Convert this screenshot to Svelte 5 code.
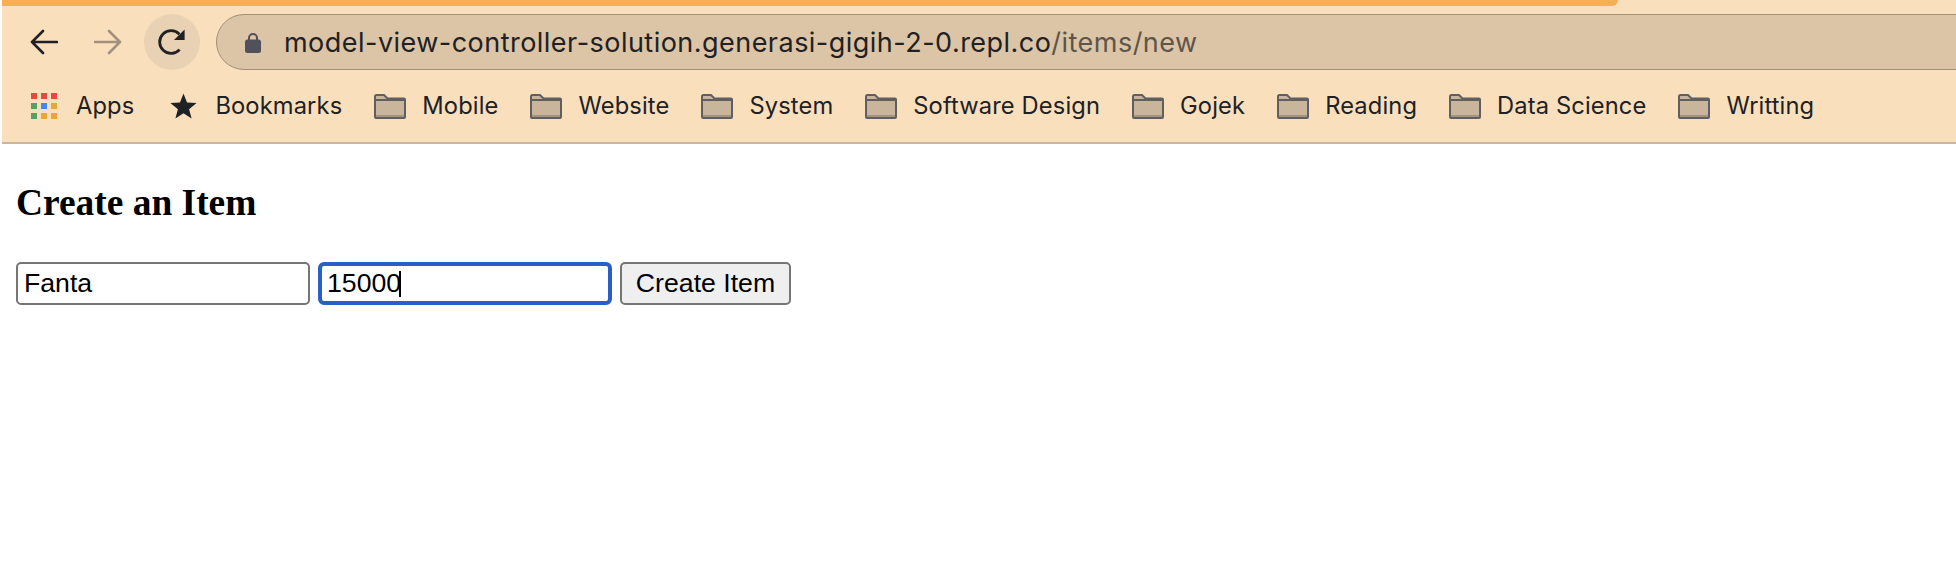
<script>
  const folders = ['Mobile', 'Website', 'System', 'Software Design', 'Gojek', 'Reading', 'Data Science', 'Writting'];
  const appColors = ['#e64a3f', '#e64a3f', '#e64a3f', '#55a164', '#4285f4', '#e8a63a', '#55a164', '#e8a63a', '#e8a63a'];

  let name = 'Fanta';
  let price = '15000';
</script>

<div class="chrome">
  <div class="tabstrip"></div>

  <div class="nav">
    <button class="navbtn" aria-label="Back">
      <svg width="28" height="26" viewBox="0 0 28 26">
        <path d="M27 13H2M13 2 2 13l11 11" fill="none" stroke="#202124" stroke-width="2.6" stroke-linecap="round" stroke-linejoin="round" />
      </svg>
    </button>
    <button class="navbtn" aria-label="Forward">
      <svg width="28" height="26" viewBox="0 0 28 26">
        <path d="M1 13h25M15 2l11 11-11 11" fill="none" stroke="#a1917d" stroke-width="2.6" stroke-linecap="round" stroke-linejoin="round" />
      </svg>
    </button>
    <button class="navbtn reload" aria-label="Reload">
      <svg width="30" height="28" viewBox="0 0 30 28">
        <path d="M22.6 21.6A11.4 11.4 0 1 1 22.4 6.2" fill="none" stroke="#202124" stroke-width="2.8" />
        <path d="M27.6 1.4V12H17z" fill="#202124" />
      </svg>
    </button>

    <div class="omnibox">
      <svg class="lock" width="16" height="21" viewBox="0 0 16 21">
        <path d="M4 9V6a4 4 0 0 1 8 0v3" fill="none" stroke="#50515a" stroke-width="2" />
        <rect y="7.5" width="16" height="13.5" rx="2.5" fill="#50515a" />
      </svg>
      <span class="url">model-view-controller-solution.generasi-gigih-2-0.repl.co<span class="path">/items/new</span></span>
    </div>
  </div>

  <div class="bookmarks">
    <div class="bookmark apps">
      <div class="appgrid">
        {#each appColors as color}
          <i style="background: {color}"></i>
        {/each}
      </div>
      <span>Apps</span>
    </div>
    <div class="bookmark starred">
      <svg width="27" height="26" viewBox="0 0 27 26">
        <path d="M13.5 0.5 17 9.6l9.6.5-7.5 6.1 2.5 9.3-8.1-5.2-8.1 5.2 2.5-9.3L.4 10.1l9.6-.5z" fill="#202124" />
      </svg>
      <span>Bookmarks</span>
    </div>
    {#each folders as folder}
      <div class="bookmark">
        <svg width="32" height="25" viewBox="0 0 32 25">
          <path d="M1 23V2.5A1.5 1.5 0 0 1 2.500 1H10l3.500 3.500H30A1 1 0 0 1 31 5.500V23a1 1 0 0 1-1 1H2a1 1 0 0 1-1-1z" fill="#c9b59c" />
          <path d="M1 21h30v2.500a.5.5 0 0 1-.5.5h-29a.5.5 0 0 1-.5-.5z" fill="#a3937f" />
          <path d="M1 23V2.500A1.500 1.500 0 0 1 2.500 1H10l3.500 3.500H30A1 1 0 0 1 31 5.500V23a1 1 0 0 1-1 1H2a1 1 0 0 1-1-1zM1 6h30" fill="none" stroke="#5f5f5f" stroke-width="2" />
        </svg>
        <span>{folder}</span>
      </div>
    {/each}
  </div>
</div>

<main>
  <h3>Create an Item</h3>
  <form on:submit|preventDefault>
    <input type="text" bind:value={name} />
    <div class="focused">
      <input type="text" bind:value={price} />
      <span class="caret"></span>
    </div>
    <button class="submit" type="submit">Create Item</button>
  </form>
</main>

<style>
  :global(body) {
    background: #fff;
  }

  .chrome {
    margin-left: 2px;
    height: 142px;
    background: #fadfbd;
    border-bottom: 2px solid #c9b69e;
    overflow: hidden;
    font-family: Inter, "Liberation Sans", sans-serif;
    color: #202124;
  }

  .tabstrip {
    width: 1616px;
    height: 6px;
    background: #f4af58;
    border-bottom-right-radius: 10px;
  }

  .nav {
    display: flex;
    align-items: center;
    margin-top: 8px;
    height: 56px;
    padding-left: 14px;
  }

  .navbtn {
    display: flex;
    align-items: center;
    justify-content: center;
    width: 56px;
    height: 56px;
    margin-right: 8px;
    padding: 0;
    border: 0;
    border-radius: 50%;
    background: none;
  }

  .reload {
    margin-right: 0;
    background: #e9d2b3;
  }

  .omnibox {
    display: flex;
    align-items: center;
    flex: 1;
    height: 56px;
    margin-left: 16px;
    margin-right: -60px;
    padding-left: 28px;
    box-sizing: border-box;
    background: #dcc4a6;
    border: 1px solid #a18f78;
    border-radius: 28px;
  }

  .lock {
    flex-shrink: 0;
  }

  .url {
    margin-left: 23px;
    font-size: 27px;
    letter-spacing: 0.47px;
    white-space: nowrap;
  }

  .path {
    color: #5d554b;
  }

  .bookmarks {
    display: flex;
    align-items: center;
    gap: 32px;
    height: 72px;
    padding-left: 29px;
    font-size: 23.7px;
    letter-spacing: 0.13px;
    white-space: nowrap;
  }

  .bookmark {
    display: flex;
    align-items: center;
    gap: 16px;
  }

  .bookmark span {
    margin-bottom: 2px;
  }

  .apps {
    gap: 19px;
    margin-right: 4px;
  }

  .starred {
    gap: 18px;
  }

  .appgrid {
    display: grid;
    grid-template-columns: repeat(3, 6px);
    grid-auto-rows: 6px;
    gap: 4px;
  }

  .appgrid i {
    display: block;
  }

  main {
    padding: 0 16px;
    font-family: "Liberation Serif", serif;
  }

  h3 {
    margin: 37px 0 38px;
    font-size: 37.44px;
    line-height: 43px;
    font-weight: bold;
    color: #000;
  }

  form {
    display: flex;
    align-items: flex-start;
    gap: 8px;
  }

  input {
    display: block;
    box-sizing: border-box;
    width: 294px;
    height: 43px;
    padding: 0 6px;
    margin: 0;
    border: 2px solid #767676;
    border-radius: 5px;
    background: #fff;
    color: #000;
    font-family: "Liberation Sans", Arial, sans-serif;
    font-size: 26.67px;
    outline: none;
  }

  .focused {
    position: relative;
  }

  .focused input {
    width: 294px;
    border: 4px solid #2a5fc7;
    padding: 0 5px;
    border-radius: 6px;
  }

  .caret {
    position: absolute;
    left: 81px;
    top: 9px;
    width: 2px;
    height: 26px;
    background: #000;
  }

  .submit {
    box-sizing: border-box;
    height: 43px;
    width: 171px;
    padding: 0;
    border: 2px solid #767676;
    border-radius: 5px;
    background: #efefef;
    color: #000;
    font-family: "Liberation Sans", Arial, sans-serif;
    font-size: 26.67px;
  }
</style>
